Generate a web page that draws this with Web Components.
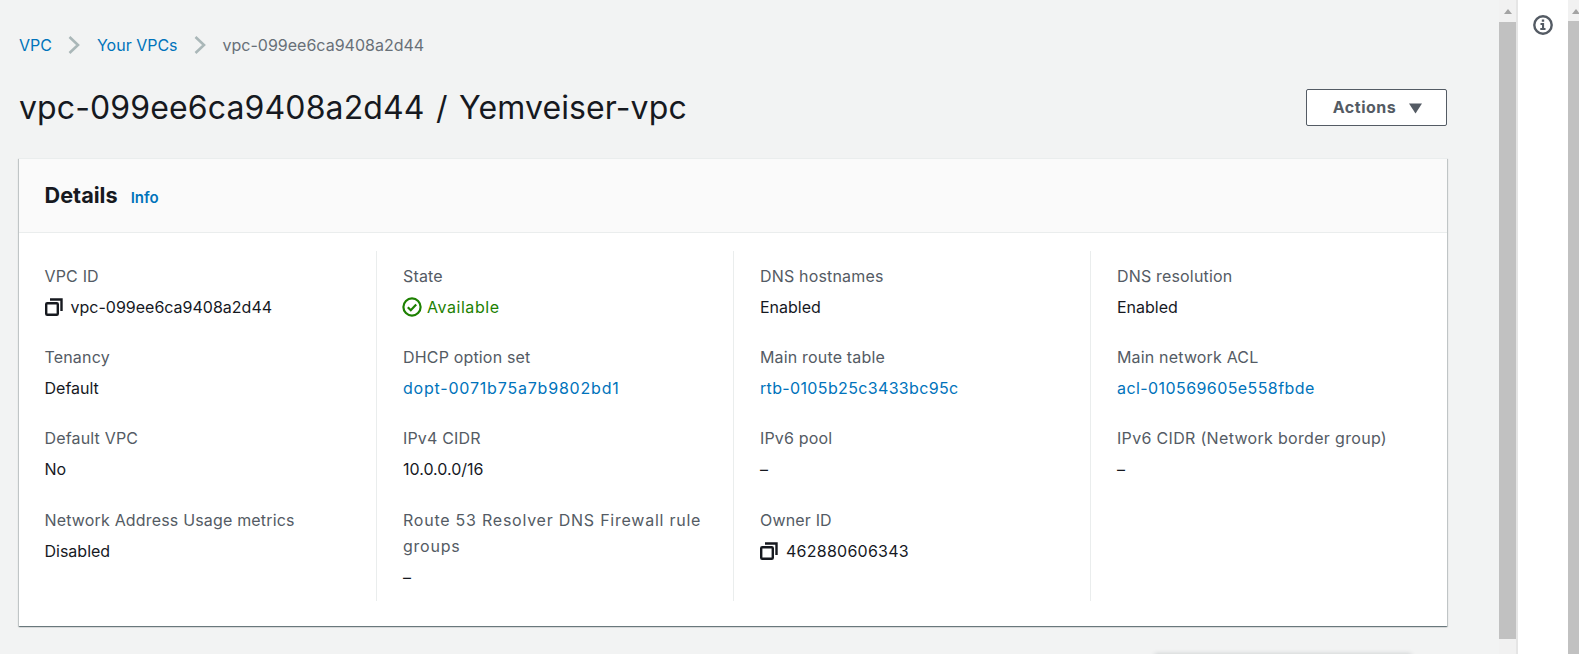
<!DOCTYPE html>
<html>
<head>
<meta charset="utf-8">
<title>VPC details</title>
<style>
    html, body { margin: 0; height: 100%; overflow: hidden; }
    body { font-family: Inter, "Noto Sans", sans-serif; background: #fff; }
</style>
</head>
<body>
<vpc-page>
    <bread-crumbs></bread-crumbs>
    <page-header title-text="vpc-099ee6ca9408a2d44 / Yemveiser-vpc"></page-header>
    <details-card>
        <kv-col>
            <kv-item label="VPC ID" type="copy">vpc-099ee6ca9408a2d44</kv-item>
            <kv-item label="Tenancy">Default</kv-item>
            <kv-item label="Default VPC">No</kv-item>
            <kv-item label="Network Address Usage metrics">Disabled</kv-item>
        </kv-col>
        <kv-col>
            <kv-item label="State" type="status">Available</kv-item>
            <kv-item label="DHCP option set" type="link" style="--value-spacing: .8px">dopt-0071b75a7b9802bd1</kv-item>
            <kv-item label="IPv4 CIDR">10.0.0.0/16</kv-item>
            <kv-item label="Route 53 Resolver DNS Firewall rule groups" style="--label-spacing: .76px">–</kv-item>
        </kv-col>
        <kv-col>
            <kv-item label="DNS hostnames">Enabled</kv-item>
            <kv-item label="Main route table" type="link">rtb-0105b25c3433bc95c</kv-item>
            <kv-item label="IPv6 pool">–</kv-item>
            <kv-item label="Owner ID" type="copy" style="--value-spacing: .25px">462880606343</kv-item>
        </kv-col>
        <kv-col>
            <kv-item label="DNS resolution">Enabled</kv-item>
            <kv-item label="Main network ACL" type="link" style="--value-spacing: .42px">acl-010569605e558fbde</kv-item>
            <kv-item label="IPv6 CIDR (Network border group)" style="--label-spacing: .32px">–</kv-item>
        </kv-col>
    </details-card>
</vpc-page>

<script>
const copyIcon = `<svg width="18" height="18" viewBox="0 0 18 18" fill="none" stroke="#16191f" stroke-width="2.4"><rect x="1.2" y="5.2" width="11.6" height="11.6" rx="1"/><path d="M5 1.5h11.5V13"/></svg>`;
const statusIcon = `<svg width="20" height="20" viewBox="0 0 20 20" fill="none" stroke="#1d8102" stroke-width="2.2"><circle cx="10" cy="10" r="8.6"/><path d="M5.8 10.2l3 3 5.4-5.6"/></svg>`;

class BreadCrumbs extends HTMLElement {
    constructor() {
        super();
        this.attachShadow({ mode: 'open' });
    }
    connectedCallback() {
        const chevron = `<svg width="12" height="18" viewBox="0 0 12 18" fill="none" stroke="#aab7b8" stroke-width="2.6"><path d="M1.5 1l8.5 8-8.5 8"/></svg>`;
        this.shadowRoot.innerHTML = `
            <style>
                :host { display: flex; align-items: center; height: 26px; font-size: 16px; }
                a { color: #0073bb; text-decoration: none; }
                span { color: #687078; }
                svg { margin: 0 17px 0 16px; }
            </style>
            <a href="#">VPC</a>${chevron}<a href="#">Your VPCs</a>${chevron}<span>vpc-099ee6ca9408a2d44</span>
        `;
    }
}
customElements.define('bread-crumbs', BreadCrumbs);

class PageHeader extends HTMLElement {
    constructor() {
        super();
        this.attachShadow({ mode: 'open' });
    }
    connectedCallback() {
        this.shadowRoot.innerHTML = `
            <style>
                :host { display: flex; justify-content: space-between; align-items: center; margin-top: 24px; height: 50px; }
                h1 { margin: 0; font-size: 32px; font-weight: 400; color: #16191f; letter-spacing: .12px; word-spacing: 2.3px; }
                button {
                    width: 141px; height: 37px; box-sizing: border-box;
                    border: 1px solid #545b64; border-radius: 2px; background: #fff;
                    color: #545b64; font: 700 16px Inter, "Noto Sans", sans-serif; letter-spacing: .5px;
                    display: flex; align-items: center; justify-content: center; gap: 13px; padding: 0 0 0 2px;
                }
                svg { margin-top: 2px; }
            </style>
            <h1>${this.getAttribute('title-text')}</h1>
            <button>Actions <svg width="13" height="11" viewBox="0 0 13 11"><path d="M0 0.5h13L6.5 10.5z" fill="#545b64"/></svg></button>
        `;
    }
}
customElements.define('page-header', PageHeader);

class DetailsCard extends HTMLElement {
    constructor() {
        super();
        this.attachShadow({ mode: 'open' });
    }
    connectedCallback() {
        this.shadowRoot.innerHTML = `
            <style>
                :host {
                    display: block; margin: 26px 0 0; width: 1428px; background: #fff;
                    box-shadow: 0 1px 1px 0 rgba(0,28,36,.4), 1px 1px 1px 0 rgba(0,28,36,.15), -1px 1px 1px 0 rgba(0,28,36,.15);
                    border-top: 1px solid #eaeded;
                }
                header {
                    display: flex; align-items: baseline; gap: 13px; height: 74px; box-sizing: border-box;
                    padding: 23px 26px 0 25.5px; background: #fafafa; border-bottom: 1px solid #eaeded;
                }
                h2 { margin: 0; font-size: 21.7px; line-height: 26px; font-weight: 700; color: #16191f; }
                a { font-size: 15px; font-weight: 600; color: #0073bb; text-decoration: none; }
                .grid { display: grid; grid-template-columns: 357px 357px 357px 1fr; padding: 18px 0 25px; height: 350px; }
            </style>
            <header><h2>Details</h2><a href="#">Info</a></header>
            <div class="grid"><slot></slot></div>
        `;
    }
}
customElements.define('details-card', DetailsCard);

class KvCol extends HTMLElement {
    constructor() {
        super();
        this.attachShadow({ mode: 'open' });
    }
    connectedCallback() {
        this.shadowRoot.innerHTML = `
            <style>
                :host { display: flex; flex-direction: column; gap: 24.2px; padding: 12px 26px 0; border-left: 1px solid #eaeded; }
                :host(:first-child) { border-left: 0; padding-left: 25.5px; }
            </style>
            <slot></slot>
        `;
    }
}
customElements.define('kv-col', KvCol);

class KvItem extends HTMLElement {
    constructor() {
        super();
        this.attachShadow({ mode: 'open' });
    }
    connectedCallback() {
        const type = this.getAttribute('type');
        let value = '<slot></slot>';
        if (type === 'copy') value = `<span class="row">${copyIcon}<slot></slot></span>`;
        if (type === 'status') value = `<span class="row status">${statusIcon}<slot></slot></span>`;
        if (type === 'link') value = `<a href="#"><slot></slot></a>`;
        this.shadowRoot.innerHTML = `
            <style>
                :host { display: block; font-size: 16px; line-height: 26px; }
                .label { color: #545b64; margin-bottom: 5px; letter-spacing: var(--label-spacing, .17px); }
                .value { color: #16191f; letter-spacing: var(--value-spacing, 0); }
                .row { display: flex; align-items: center; gap: 8px; }
                .status { color: #1d8102; gap: 5px; letter-spacing: .55px; margin-left: -1px; }
                a { color: #0073bb; text-decoration: none; letter-spacing: var(--value-spacing, .35px); }
            </style>
            <div class="label">${this.getAttribute('label')}</div>
            <div class="value">${value}</div>
        `;
    }
}
customElements.define('kv-item', KvItem);

class VpcPage extends HTMLElement {
    constructor() {
        super();
        this.attachShadow({ mode: 'open' });
    }
    connectedCallback() {
        this.shadowRoot.innerHTML = `
            <style>
                :host { display: flex; height: 654px; }
                main { width: 1499px; box-sizing: border-box; padding: 32px 52px 0 19px; background: #f2f3f3; position: relative; overflow: hidden; }
                .next-card { position: absolute; left: 1155px; width: 256px; top: 655px; height: 20px; box-shadow: 0 -1px 5px rgba(0,28,36,.18); }
                .bar { background: #f1f1f1; position: relative; flex: none; }
                .bar i { position: absolute; left: 0; right: 0; background: #c1c1c1; }
                .bar b { position: absolute; left: 50%; margin-left: -4px; top: 9px; border: 4px solid transparent; border-top: 0; border-bottom: 5px solid #a3a3a3; }
                .main-bar { width: 17px; }
                .main-bar i { top: 22px; height: 617px; }
                .divider { width: 2px; background: #e5e5e5; flex: none; }
                aside { width: 50px; background: #fff; display: flex; justify-content: center; padding-top: 15px; box-sizing: border-box; flex: none; }
                .side-bar { width: 11px; }
                .side-bar i { top: 21px; height: 633px; }
                .side-bar b { margin-left: -2px; }
            </style>
            <main><slot></slot><div class="next-card"></div></main>
            <div class="bar main-bar"><b></b><i></i></div>
            <div class="divider"></div>
            <aside>
                <svg width="20" height="20" viewBox="0 0 20 20">
                    <circle cx="10" cy="10" r="8.7" fill="none" stroke="#545b64" stroke-width="2.4"/>
                    <path d="M7.5 8h3.6v5h1.4v2h-5.2v-2H9v-3H7.5zM8.8 4.5h2.4v2.2H8.8z" fill="#545b64"/>
                </svg>
            </aside>
            <div class="bar side-bar"><b></b><i></i></div>
        `;
    }
}
customElements.define('vpc-page', VpcPage);
</script>
</body>
</html>
